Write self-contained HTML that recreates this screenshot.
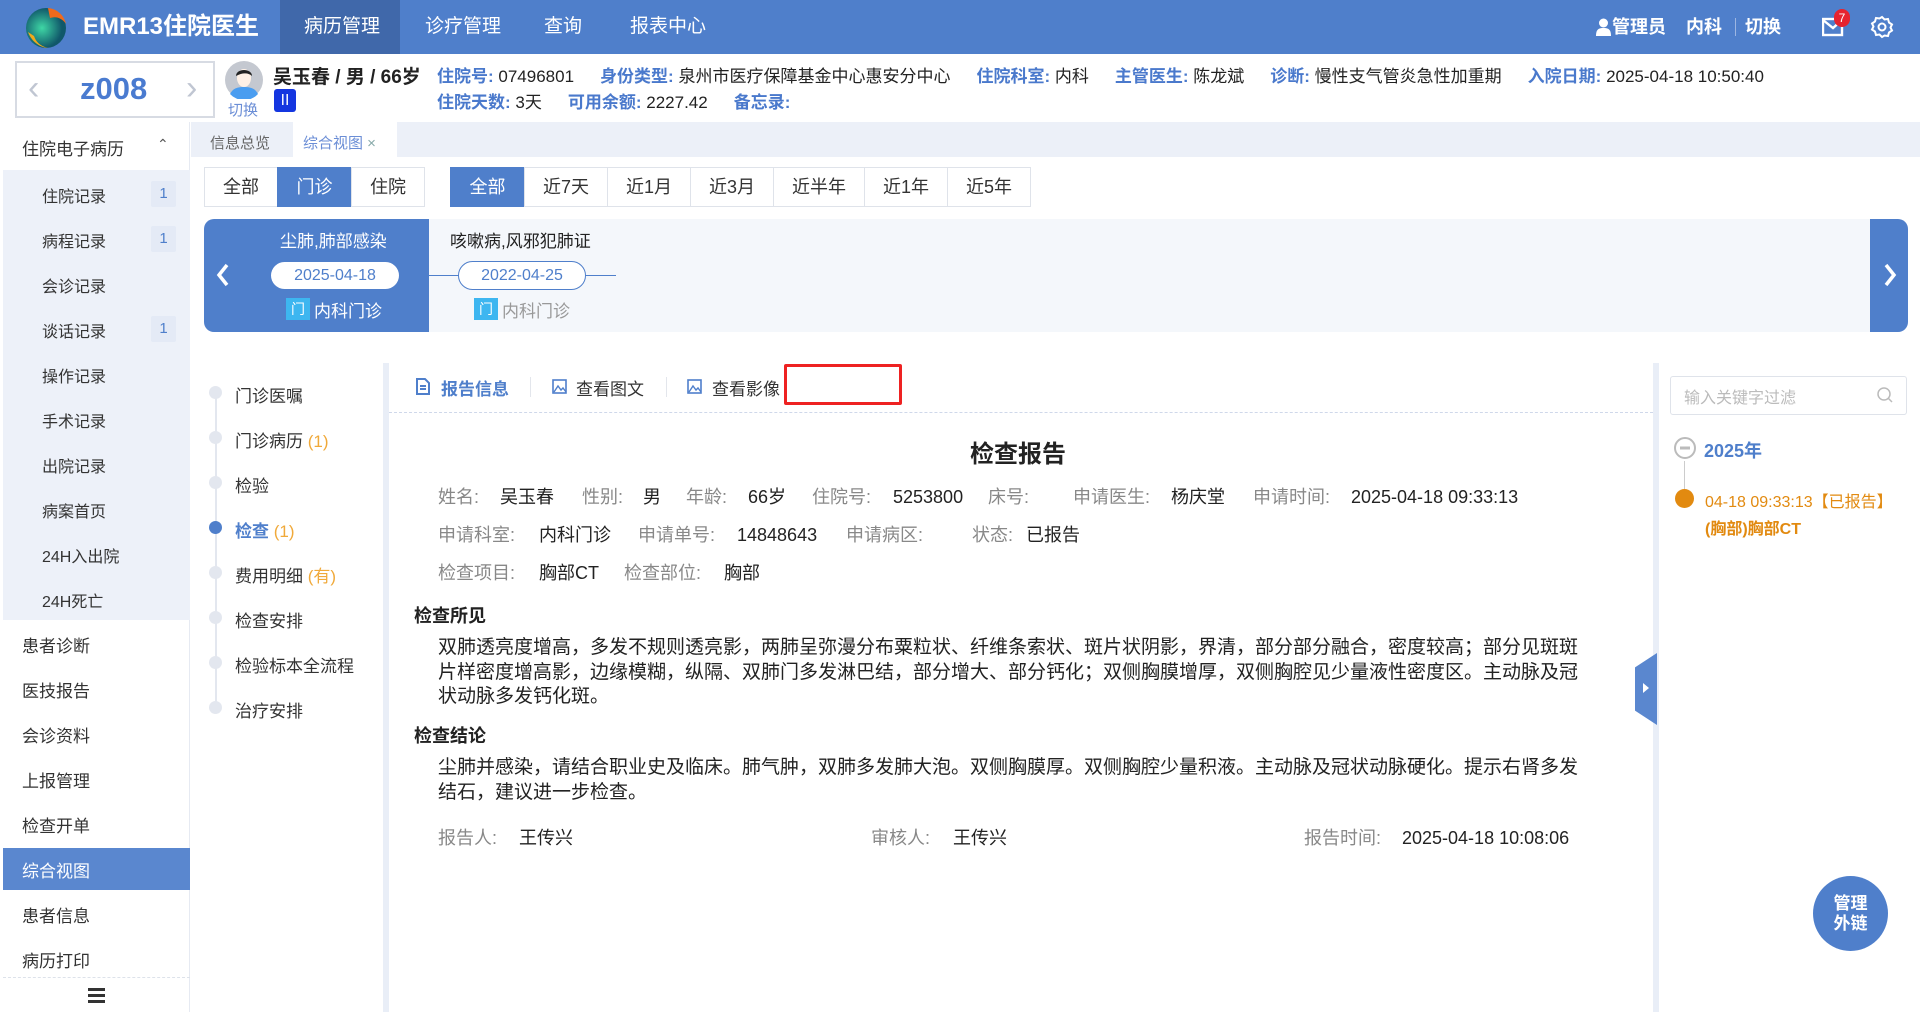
<!DOCTYPE html>
<html><head><meta charset="utf-8"><style>
*{margin:0;padding:0;box-sizing:border-box}
body{width:1920px;height:1012px;overflow:hidden;font-family:"Liberation Sans","Noto Sans CJK SC",sans-serif;background:#fff;position:relative;color:#222}
.a{position:absolute;white-space:nowrap}
.hdr{left:0;top:0;width:1920px;height:54px;background:#4f7fcb}
.nav{top:0;height:54px;line-height:54px;color:#fff;font-size:19px}
.lbl{color:#4a79cc;font-weight:bold}
.gp{margin-left:26px}
.side{left:0;top:122px;width:190px;height:890px;background:#fff;border-right:1px solid #e6eaf2}
.si{left:42px;font-size:16px;color:#333}
.badge{left:151px;width:25px;height:26px;background:#e4eaf6;color:#4f7fcb;font-size:15px;text-align:center;line-height:26px;border-radius:2px}
.ti{left:22px;font-size:17px;color:#333}
.btn{top:167px;height:40px;line-height:38px;text-align:center;font-size:18px;color:#333;border:1px solid #dfe3ea;background:#fff}
.on{background:#4f7fcb;color:#fff;border-color:#4f7fcb}
.ln{left:235px;font-size:17px;color:#333}
.dot{left:209px;width:13px;height:13px;border-radius:50%;background:#e3e7ef}
.g{color:#888;font-size:18px;position:absolute;white-space:nowrap;line-height:26px;height:26px}
.v{font-size:18px;position:absolute;white-space:nowrap;line-height:26px;height:26px}
</style></head><body>
<div class="a hdr"></div>
<svg class="a" style="left:24px;top:6px" width="44" height="44" viewBox="0 0 44 44"><defs><radialGradient id="g1" cx="40%" cy="50%"><stop offset="0" stop-color="#3fd7a5"/><stop offset="1" stop-color="#10586a"/></radialGradient></defs><circle cx="22" cy="22" r="20" fill="url(#g1)"/><path d="M24 2a20 20 0 0 1 18 16c-4-6-10-8-16-6z" fill="#f06a1c"/><path d="M4 26c3 8 10 15 20 16-8-2-12-6-14-12z" fill="#f1a91a"/></svg>
<div class="a" style="left:83px;top:0;line-height:54px;color:#fff;font-size:24px;font-weight:bold">EMR13住院医生</div>
<div class="a" style="left:280px;top:0;width:120px;height:54px;background:#4068aa"></div>
<div class="a nav" style="left:304px">病历管理</div>
<div class="a nav" style="left:425px">诊疗管理</div>
<div class="a nav" style="left:544px">查询</div>
<div class="a nav" style="left:630px">报表中心</div>
<svg class="a" style="left:1596px;top:18px" width="15" height="18"><circle cx="7.5" cy="5" r="4.5" fill="#fff"/><path d="M0 18c0-7 3-8 7.5-8s7.5 1 7.5 8z" fill="#fff"/></svg>
<div class="a nav" style="left:1612px;font-weight:bold;font-size:18px">管理员</div>
<div class="a nav" style="left:1686px;font-weight:bold;font-size:18px">内科</div>
<div class="a" style="left:1735px;top:18px;width:1px;height:18px;background:#9db6e2"></div>
<div class="a nav" style="left:1745px;font-weight:bold;font-size:18px">切换</div>
<svg class="a" style="left:1822px;top:17px" width="22" height="20"><rect x="1" y="2" width="19" height="16" fill="none" stroke="#fff" stroke-width="2.4"/><path d="M1 3l10 8 9-8" fill="none" stroke="#fff" stroke-width="2.4"/></svg>
<div class="a" style="left:1834px;top:9px;width:16px;height:18px;border-radius:9px;background:#e6232f;color:#fff;font-size:12px;text-align:center;line-height:18px">7</div>
<svg class="a" style="left:1870px;top:15px" width="24" height="24" viewBox="0 0 24 24"><path d="M12 2l2.5 2.5 3.5-.5 1 3.5 3 2-1.5 3 1.5 3-3 2-1 3.5-3.5-.5L12 22l-2.5-2.5-3.5.5-1-3.5-3-2 1.5-3-1.5-3 3-2 1-3.5 3.5.5z" fill="none" stroke="#fff" stroke-width="2"/><circle cx="12" cy="12" r="3.5" fill="none" stroke="#fff" stroke-width="2"/></svg>

<!-- patient bar -->
<div class="a" style="left:15px;top:61px;width:200px;height:57px;border:2px solid #d7dbe3"></div>
<div class="a" style="left:28px;top:69px;font-size:34px;color:#c0c6d2">&#8249;</div>
<div class="a" style="left:186px;top:69px;font-size:34px;color:#c0c6d2">&#8250;</div>
<div class="a" style="left:80px;top:71px;font-size:31px;font-weight:bold;color:#4a7bd0">z008</div>
<svg class="a" style="left:225px;top:61px" width="38" height="38"><circle cx="19" cy="19" r="19" fill="#c4c8d0"/><path d="M5 33c3-6 8-7 14-7s11 1 14 7a19 19 0 0 1-28 0z" fill="#4a9df0"/><ellipse cx="19" cy="17" rx="7" ry="9" fill="#fff1e6"/><path d="M11 15c0-8 16-8 16 0-3-3-9-4-16 0z" fill="#222"/></svg>
<div class="a" style="left:228px;top:99px;font-size:15px;color:#6b8ed6">切换</div>
<div class="a" style="left:273px;top:62px;font-size:19px;font-weight:bold">吴玉春 / 男 / 66岁</div>
<div class="a" style="left:274px;top:89px;width:22px;height:23px;background:#1436e0;color:#fff;border-radius:3px;text-align:center;font-size:15px;line-height:23px">Ⅱ</div>
<div class="a" style="left:437px;top:62px;font-size:17px"><span class="lbl">住院号:</span> 07496801<span class="gp lbl">身份类型:</span> 泉州市医疗保障基金中心惠安分中心<span class="gp lbl">住院科室:</span> 内科<span class="gp lbl">主管医生:</span> 陈龙斌<span class="gp lbl">诊断:</span> 慢性支气管炎急性加重期<span class="gp lbl">入院日期:</span> 2025-04-18 10:50:40</div>
<div class="a" style="left:437px;top:88px;font-size:17px"><span class="lbl">住院天数:</span> 3天<span class="gp lbl">可用余额:</span> 2227.42<span class="gp lbl">备忘录:</span></div>

<!-- sidebar -->
<div class="a side"></div>
<div class="a" style="left:3px;top:170px;width:187px;height:450px;background:#edf1f9"></div>
<div class="a ti" style="left:22px;top:135px">住院电子病历</div>
<div class="a" style="left:157px;top:136px;font-size:14px;color:#555">&#8963;</div>
<div class="a si" style="top:183px">住院记录</div><div class="a badge" style="top:181px">1</div>
<div class="a si" style="top:228px">病程记录</div><div class="a badge" style="top:226px">1</div>
<div class="a si" style="top:273px">会诊记录</div>
<div class="a si" style="top:318px">谈话记录</div><div class="a badge" style="top:316px">1</div>
<div class="a si" style="top:363px">操作记录</div>
<div class="a si" style="top:408px">手术记录</div>
<div class="a si" style="top:453px">出院记录</div>
<div class="a si" style="top:498px">病案首页</div>
<div class="a si" style="top:543px">24H入出院</div>
<div class="a si" style="top:588px">24H死亡</div>
<div class="a ti" style="top:632px">患者诊断</div>
<div class="a ti" style="top:677px">医技报告</div>
<div class="a ti" style="top:722px">会诊资料</div>
<div class="a ti" style="top:767px">上报管理</div>
<div class="a ti" style="top:812px">检查开单</div>
<div class="a" style="left:3px;top:848px;width:187px;height:42px;background:#5a87cf"></div>
<div class="a ti" style="top:857px;color:#fff">综合视图</div>
<div class="a ti" style="top:902px">患者信息</div>
<div class="a ti" style="top:947px">病历打印</div>
<div class="a" style="left:3px;top:977px;width:187px;border-top:1px dashed #dde2ea"></div>
<div class="a" style="left:88px;top:988px;width:17px;height:3px;background:#333;box-shadow:0 6px 0 #333,0 12px 0 #333"></div>

<!-- main -->
<div class="a" style="left:191px;top:122px;width:1729px;height:35px;background:#ecf0f8"></div>
<div class="a" style="left:210px;top:132px;font-size:15px;color:#666">信息总览</div>
<div class="a" style="left:293px;top:122px;width:104px;height:36px;background:#fff"></div>
<div class="a" style="left:303px;top:132px;font-size:15px;color:#6b8ed6">综合视图 <span style="color:#8aa">×</span></div>

<div class="a btn" style="left:204px;width:74px">全部</div>
<div class="a btn on" style="left:277px;width:75px">门诊</div>
<div class="a btn" style="left:351px;width:74px">住院</div>
<div class="a btn on" style="left:450px;width:75px">全部</div>
<div class="a btn" style="left:524px;width:84px">近7天</div>
<div class="a btn" style="left:607px;width:84px">近1月</div>
<div class="a btn" style="left:690px;width:84px">近3月</div>
<div class="a btn" style="left:773px;width:92px">近半年</div>
<div class="a btn" style="left:864px;width:84px">近1年</div>
<div class="a btn" style="left:947px;width:84px">近5年</div>

<div class="a" style="left:204px;top:219px;width:1704px;height:113px;background:#f4f7fb;border-radius:10px"></div>
<div class="a" style="left:204px;top:219px;width:225px;height:113px;background:#4f7fcb;border-radius:10px 0 0 10px"></div>
<div class="a" style="left:1870px;top:219px;width:38px;height:113px;background:#4f7fcb;border-radius:0 10px 10px 0"></div>
<svg class="a" style="left:215px;top:262px" width="16" height="26"><path d="M12 3L4 13l8 10" fill="none" stroke="#fff" stroke-width="3.5"/></svg>
<svg class="a" style="left:1882px;top:262px" width="16" height="26"><path d="M4 3l8 10-8 10" fill="none" stroke="#fff" stroke-width="3.5"/></svg>
<div class="a" style="left:280px;top:227px;font-size:17px;color:#fff">尘肺,肺部感染</div>
<div class="a" style="left:271px;top:262px;width:128px;height:27px;border-radius:14px;background:#fff;color:#4f7fcb;font-size:16px;text-align:center;line-height:27px">2025-04-18</div>
<div class="a" style="left:286px;top:298px;width:24px;height:22px;background:#3db6f0;color:#fff;font-size:14px;text-align:center;line-height:22px">门</div>
<div class="a" style="left:314px;top:297px;font-size:17px;color:#fff">内科门诊</div>
<div class="a" style="left:429px;top:275px;width:187px;height:1px;background:#4f7fcb"></div>
<div class="a" style="left:450px;top:227px;font-size:17px;color:#222">咳嗽病,风邪犯肺证</div>
<div class="a" style="left:458px;top:261px;width:128px;height:29px;border-radius:15px;background:#fff;border:1px solid #4f7fcb;color:#4f7fcb;font-size:16px;text-align:center;line-height:27px">2022-04-25</div>
<div class="a" style="left:474px;top:298px;width:24px;height:22px;background:#3db6f0;color:#fff;font-size:14px;text-align:center;line-height:22px">门</div>
<div class="a" style="left:502px;top:297px;font-size:17px;color:#999">内科门诊</div>

<!-- left list -->
<div class="a" style="left:215px;top:393px;width:2px;height:315px;background:#e3e7ef"></div>
<div class="a dot" style="top:386px"></div><div class="a ln" style="top:382px">门诊医嘱</div>
<div class="a dot" style="top:431px"></div><div class="a ln" style="top:427px">门诊病历 <span style="color:#f0a93a">(1)</span></div>
<div class="a dot" style="top:476px"></div><div class="a ln" style="top:472px">检验</div>
<div class="a dot" style="top:521px;background:#4f7fcb"></div><div class="a ln" style="top:517px;color:#4f7fcb;font-weight:bold">检查 <span style="color:#f0a93a;font-weight:normal">(1)</span></div>
<div class="a dot" style="top:566px"></div><div class="a ln" style="top:562px">费用明细 <span style="color:#f0a93a">(有)</span></div>
<div class="a dot" style="top:611px"></div><div class="a ln" style="top:607px">检查安排</div>
<div class="a dot" style="top:656px"></div><div class="a ln" style="top:652px">检验标本全流程</div>
<div class="a dot" style="top:701px"></div><div class="a ln" style="top:697px">治疗安排</div>

<div class="a" style="left:383px;top:363px;width:6px;height:649px;background:#e9eef7"></div>
<div class="a" style="left:1653px;top:363px;width:6px;height:649px;background:#e9eef7"></div>

<!-- report -->
<svg class="a" style="left:416px;top:378px" width="14" height="17"><path d="M1 1h8l4 4v11H1z" fill="none" stroke="#4f7fcb" stroke-width="2"/><path d="M4 8h6M4 11h6" stroke="#4f7fcb" stroke-width="2"/></svg>
<div class="a" style="left:441px;top:375px;font-size:17px;font-weight:bold;color:#4f7fcb">报告信息</div>
<div class="a" style="left:530px;top:377px;width:1px;height:20px;background:#e3e6ec"></div>
<svg class="a" style="left:552px;top:379px" width="15" height="15"><rect x="1" y="1" width="13" height="13" fill="none" stroke="#4f7fcb" stroke-width="1.6"/><path d="M2 13l4-6 3 4 2-2 3 4" fill="none" stroke="#4f7fcb" stroke-width="1.4"/></svg>
<div class="a" style="left:576px;top:375px;font-size:17px;color:#333">查看图文</div>
<div class="a" style="left:666px;top:377px;width:1px;height:20px;background:#e3e6ec"></div>
<svg class="a" style="left:687px;top:379px" width="15" height="15"><rect x="1" y="1" width="13" height="13" fill="none" stroke="#4f7fcb" stroke-width="1.6"/><path d="M2 13l4-6 3 4 2-2 3 4" fill="none" stroke="#4f7fcb" stroke-width="1.4"/></svg>
<div class="a" style="left:712px;top:375px;font-size:17px;color:#333">查看影像</div>
<div class="a" style="left:784px;top:364px;width:118px;height:41px;border:3px solid #ee2222;border-radius:2px"></div>
<div class="a" style="left:389px;top:412px;width:1264px;border-top:1px dashed #cfd8ea"></div>

<div class="a" style="left:970px;top:434px;font-size:24px;font-weight:bold">检查报告</div>

<span class="g" style="left:438px;top:484px">姓名:</span><span class="v" style="left:500px;top:484px">吴玉春</span>
<span class="g" style="left:582px;top:484px">性别:</span><span class="v" style="left:643px;top:484px">男</span>
<span class="g" style="left:686px;top:484px">年龄:</span><span class="v" style="left:748px;top:484px">66岁</span>
<span class="g" style="left:812px;top:484px">住院号:</span><span class="v" style="left:893px;top:484px">5253800</span>
<span class="g" style="left:988px;top:484px">床号:</span>
<span class="g" style="left:1073px;top:484px">申请医生:</span><span class="v" style="left:1171px;top:484px">杨庆堂</span>
<span class="g" style="left:1253px;top:484px">申请时间:</span><span class="v" style="left:1351px;top:484px">2025-04-18 09:33:13</span>

<span class="g" style="left:438px;top:522px">申请科室:</span><span class="v" style="left:539px;top:522px">内科门诊</span>
<span class="g" style="left:638px;top:522px">申请单号:</span><span class="v" style="left:737px;top:522px">14848643</span>
<span class="g" style="left:846px;top:522px">申请病区:</span>
<span class="g" style="left:972px;top:522px">状态:</span><span class="v" style="left:1026px;top:522px">已报告</span>

<span class="g" style="left:438px;top:560px">检查项目:</span><span class="v" style="left:539px;top:560px">胸部CT</span>
<span class="g" style="left:624px;top:560px">检查部位:</span><span class="v" style="left:724px;top:560px">胸部</span>

<div class="a" style="left:414px;top:602px;font-size:18px;font-weight:bold">检查所见</div>
<div class="a" style="left:438px;top:636px;width:1148px;white-space:normal;font-size:19px;line-height:24.5px">双肺透亮度增高，多发不规则透亮影，两肺呈弥漫分布粟粒状、纤维条索状、斑片状阴影，界清，部分部分融合，密度较高；部分见斑斑片样密度增高影，边缘模糊，纵隔、双肺门多发淋巴结，部分增大、部分钙化；双侧胸膜增厚，双侧胸腔见少量液性密度区。主动脉及冠状动脉多发钙化斑。</div>
<div class="a" style="left:414px;top:722px;font-size:18px;font-weight:bold">检查结论</div>
<div class="a" style="left:438px;top:756px;width:1148px;white-space:normal;font-size:19px;line-height:24.5px">尘肺并感染，请结合职业史及临床。肺气肿，双肺多发肺大泡。双侧胸膜厚。双侧胸腔少量积液。主动脉及冠状动脉硬化。提示右肾多发结石，建议进一步检查。</div>
<span class="g" style="left:438px;top:825px">报告人:</span><span class="v" style="left:519px;top:825px">王传兴</span>
<span class="g" style="left:871px;top:825px">审核人:</span><span class="v" style="left:953px;top:825px">王传兴</span>
<span class="g" style="left:1304px;top:825px">报告时间:</span><span class="v" style="left:1402px;top:825px">2025-04-18 10:08:06</span>

<!-- collapse tab -->
<div class="a" style="left:1635px;top:653px;width:22px;height:72px;background:#5a87cf;clip-path:polygon(100% 0,100% 100%,0 80%,0 20%)"></div>
<div class="a" style="left:1643px;top:683px;width:0;height:0;border-left:6px solid #fff;border-top:5px solid transparent;border-bottom:5px solid transparent"></div>

<!-- right panel -->
<div class="a" style="left:1670px;top:376px;width:237px;height:39px;border:1px solid #dfe3ea;border-radius:3px"></div>
<div class="a" style="left:1684px;top:384px;font-size:16px;color:#bbb">输入关键字过滤</div>
<svg class="a" style="left:1876px;top:386px" width="18" height="18"><circle cx="8" cy="8" r="6" fill="none" stroke="#bbb" stroke-width="1.5"/><path d="M12 12l4 4" stroke="#bbb" stroke-width="1.5"/></svg>
<svg class="a" style="left:1673px;top:436px" width="24" height="24"><circle cx="12" cy="12" r="10" fill="#fff" stroke="#bbb" stroke-width="2"/><path d="M7 12h10" stroke="#bbb" stroke-width="3"/></svg>
<div class="a" style="left:1684px;top:461px;width:1px;height:28px;background:#ccc"></div>
<div class="a" style="left:1704px;top:437px;font-size:18px;font-weight:bold;color:#4f7fcb">2025年</div>
<div class="a" style="left:1675px;top:489px;width:19px;height:19px;border-radius:50%;background:#e28a10"></div>
<div class="a" style="left:1705px;top:488px;font-size:16px;color:#e28a10">04-18 09:33:13【已报告】</div>
<div class="a" style="left:1705px;top:515px;font-size:16px;font-weight:bold;color:#e28a10">(胸部)胸部CT</div>

<div class="a" style="left:1813px;top:876px;width:75px;height:75px;border-radius:50%;background:#4f7fcb;color:#fff;font-weight:bold;font-size:17px;line-height:20px;text-align:center;padding-top:18px;white-space:normal">管理<br>外链</div>
</body></html>
